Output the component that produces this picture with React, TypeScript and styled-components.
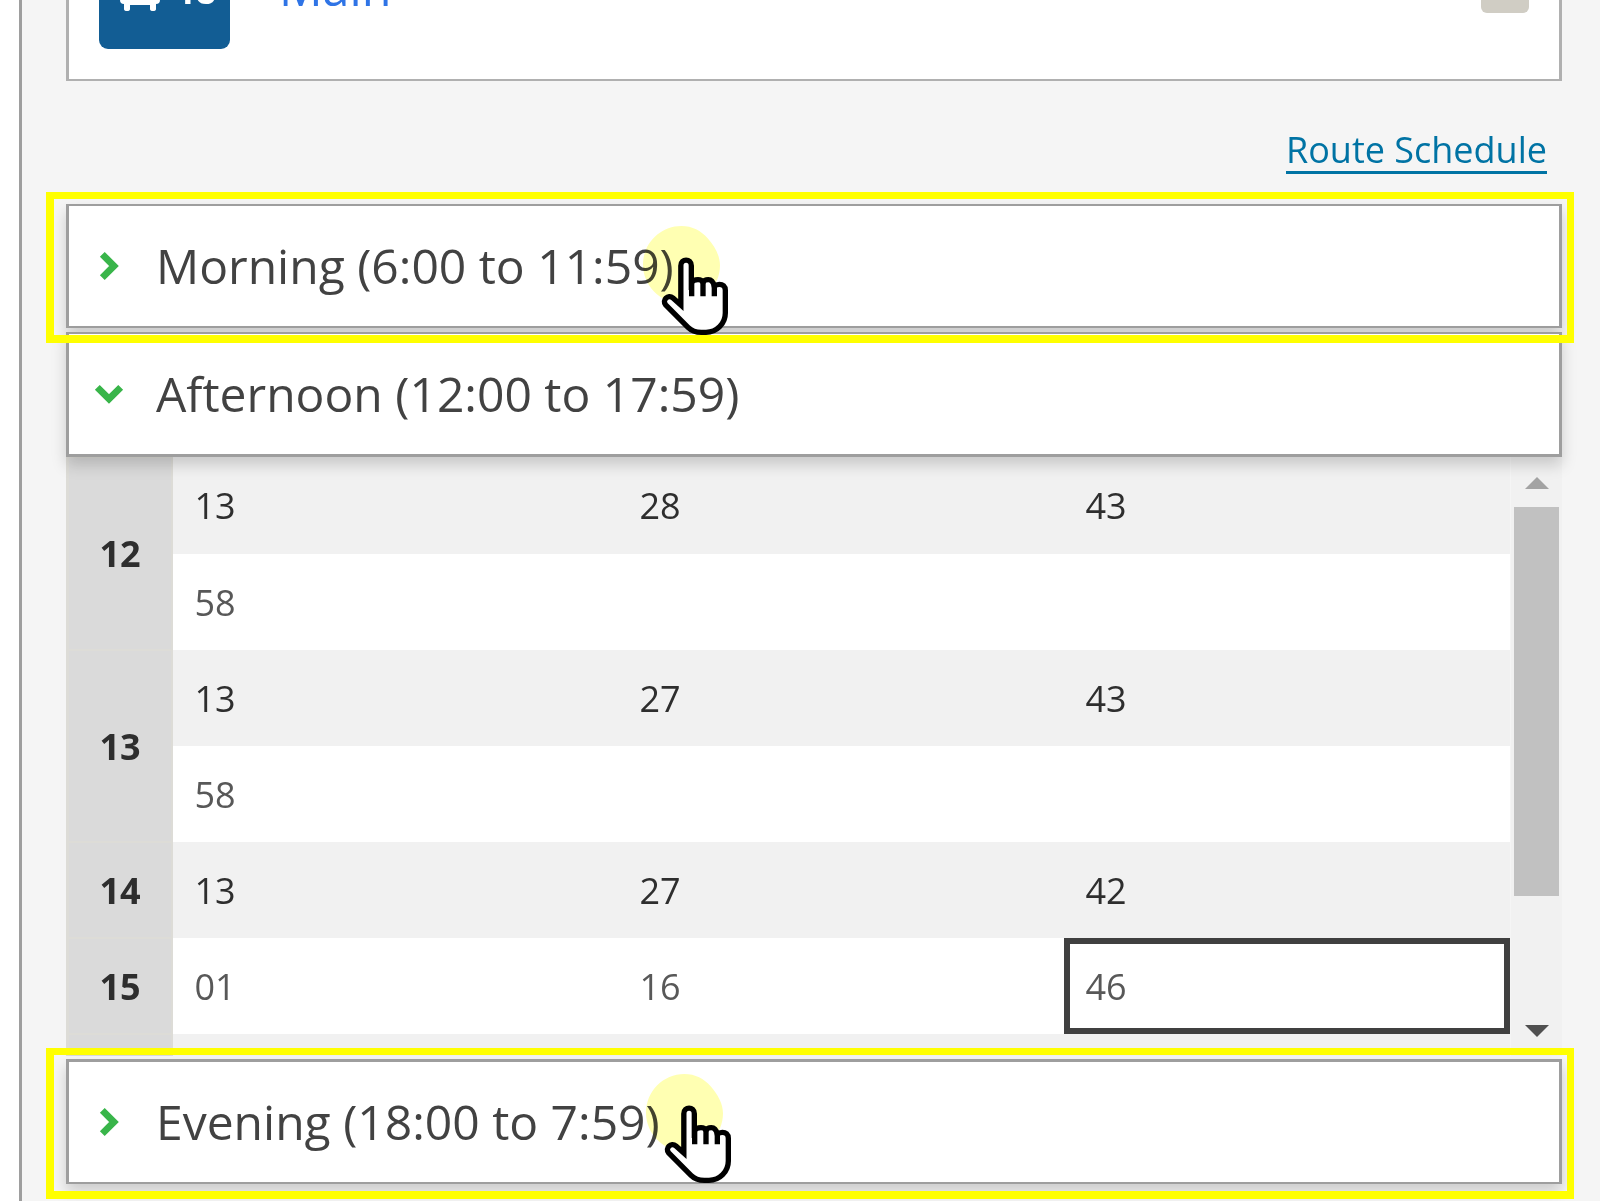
import React from 'react';
import styled, { createGlobalStyle } from 'styled-components';

const GlobalStyle = createGlobalStyle`
  * { box-sizing: border-box; }
  body { margin: 0; background: #fff; font-family: 'Open Sans', 'Noto Sans', sans-serif; }
  table { border-collapse: collapse; }
`;

const Page = styled.div`
  position: relative;
  width: 1601px;
  height: 1201px;
  overflow: hidden;
  padding: 0 1px 0 19px;
`;

const Panel = styled.main`
  height: 100%;
  padding: 0 38px 0 44px;
  border-left: 3px solid #9e9e9e;
  background: #f5f5f5;
  display: flex;
  flex-direction: column;
`;

const RouteCard = styled.section`
  flex: none;
  height: 81px;
  padding: 0 30px 30px;
  overflow: hidden;
  display: flex;
  align-items: flex-end;
  background: #fff;
  border: solid #b0b0b0;
  border-width: 0 3px 2px;
`;

const Badge = styled.div`
  width: 131px;
  height: 90px;
  flex: none;
  padding: 0 14px 38px 20px;
  display: flex;
  align-items: flex-end;
  justify-content: space-between;
  background: #125d94;
  border-radius: 9px;
  color: #fff;
`;

const BusIcon = styled.svg`
  width: 42px;
  height: 44px;
  display: block;
`;

const BadgeNumber = styled.span`
  font-size: 35px;
  font-weight: 700;
  line-height: 34px;
  height: 37px;
`;

const RouteName = styled.span`
  margin-left: 49px;
  height: 95px;
  line-height: 67px;
  font-size: 48.5px;
  color: #2f74e6;
  flex: 1;
`;

const Toggle = styled.span`
  width: 48px;
  height: 48px;
  margin-bottom: 36px;
  border-radius: 6px;
  background: #d0cdc4;
`;

const LinkRow = styled.div`
  flex: none;
  height: 123px;
  padding: 44px 15px 0 0;
  display: flex;
  justify-content: flex-end;
  align-items: flex-start;
`;

const ScheduleLink = styled.a`
  height: 49px;
  border-bottom: 3px solid #0073a4;
  color: #0073a4;
  font-size: 36px;
  line-height: 49px;
  text-decoration: none;
  white-space: nowrap;
`;

const Accordion = styled.div`
  display: flex;
  flex-direction: column;
`;

const Header = styled.button<{ $edges: string; $gap?: number }>`
  position: relative;
  z-index: 1;
  flex: none;
  height: ${(p) => (p.$edges === '2px 3px' ? 124 : 125)}px;
  margin: 0 0 ${(p) => p.$gap ?? 0}px;
  padding: 0 0 0 22px;
  display: flex;
  align-items: center;
  gap: 29px;
  background: #fff;
  border: solid #9e9e9e;
  border-width: ${(p) => p.$edges};
  box-shadow: 0 8px 14px rgba(0, 0, 0, 0.17);
  font: 400 48px/66px 'Open Sans', 'Noto Sans', sans-serif;
  color: #424242;
  text-align: left;
  white-space: nowrap;
`;

const Chevron = styled.svg<{ $open?: boolean }>`
  width: 36px;
  height: 36px;
  flex: none;
  transform: ${(p) => (p.$open ? 'rotate(90deg)' : 'none')};
`;

const Body = styled.div`
  height: 599px;
  margin-bottom: 3px;
  display: flex;
  overflow: hidden;
`;

const Grid = styled.table`
  width: 1444px;
  height: 673px;
  table-layout: fixed;
  flex: none;
  margin-right: 1px;
`;

const HourCol = styled.col`
  width: 107px;
`;

const MinuteCol = styled.col<{ $width: number }>`
  width: ${(p) => p.$width}px;
`;

const Row = styled.tr<{ $shaded: boolean; $first: boolean }>`
  height: ${(p) => (p.$first ? 97 : 96)}px;
  background: ${(p) => (p.$shaded ? '#f1f1f1' : '#fff')};
  color: ${(p) => (p.$shaded ? '#2e2e2e' : '#585858')};
`;

const Hour = styled.th`
  padding: 0 0 0 1px;
  background: #dadada;
  box-shadow: inset 3px 0 #dddcd7, inset -2px 0 #dddcd7, inset 0 -1px #dddcd7, inset 0 1px #dddcd7;
  color: #2e2e2e;
  font-size: 36px;
  font-weight: 700;
`;

const Minute = styled.td<{ $selected?: boolean }>`
  padding: 1px 0 0 21.5px;
  font-size: 36px;
  line-height: 48px;
  box-shadow: ${(p) => (p.$selected ? 'inset 0 0 0 6px #404040' : 'none')};
`;

const Scrollbar = styled.div`
  width: 51px;
  padding: 20px 3px;
  display: flex;
  flex-direction: column;
  align-items: center;
  background: #f1f1f1;
`;

const Arrow = styled.i<{ $down?: boolean }>`
  border: solid transparent;
  border-width: ${(p) => (p.$down ? '12px 12px 0' : '0 12px 12px')};
  border-color: ${(p) => (p.$down ? '#505050' : '#a3a3a3')} transparent;
`;

const Thumb = styled.div`
  width: 45px;
  height: 389px;
  margin: 18px 0 129px;
  flex: none;
  background: #c1c1c1;
`;

const Highlight = styled.div<{ $top: number }>`
  position: absolute;
  z-index: 2;
  left: 46px;
  top: ${(p) => p.$top}px;
  width: 1528px;
  height: 151px;
  border: solid #ff0;
  border-width: 7px 7px 8px 8px;
`;

const Pointer = styled.svg<{ $x: number; $y: number }>`
  position: absolute;
  z-index: 3;
  left: ${(p) => p.$x}px;
  top: ${(p) => p.$y}px;
  width: 100px;
  height: 120px;
  overflow: visible;
  mix-blend-mode: multiply;
`;

const Hand = styled(Pointer)`
  z-index: 4;
  mix-blend-mode: normal;
`;

const hours = [
  { hour: '12', rows: [['13', '28', '43'], ['58', '', '']] },
  { hour: '13', rows: [['13', '27', '43'], ['58', '', '']] },
  { hour: '14', rows: [['13', '27', '42']] },
  { hour: '15', rows: [['01', '16', '46']] },
  { hour: '', rows: [['', '', '']] },
];

const ChevronIcon = ({ open }: { open?: boolean }) => (
  <Chevron $open={open} viewBox="0 0 36 36" fill="none" stroke="#39b54a" strokeWidth="6.8">
    <path d="M11.3 6.3 L23 18 L11.3 29.7" />
  </Chevron>
);

const Cursor = ({ x, y }: { x: number; y: number }) => (
  <>
    <Pointer $x={x} $y={y} viewBox="0 0 300 360">
      <path
        d="M115 0 C148 0 174 14 194 37 C216 62 231 90 231 118 C231 182 179 231 115 231 C52 231 0 179 0 116 C0 52 52 0 115 0Z"
        fill="#ffffb2"
      />
    </Pointer>
    <Hand $x={x} $y={y} viewBox="129 77 300 360">
      <path
        d="M242.5 314 V196 C242.5 174 274 174 274 196 V246 C277 242 286 238 294 238 C300 238 306 240 309 246 C311 242 316 238 325 238 C333 238 340 245 343 258 C346 255 350 252 358 252 C368 252 376 258 376 270 V338 C376 370 350 396 318 396 H304 C289 396 274 391 264 381 L197 314 C185 300 204 280 219 293 Z"
        fill="#fff"
        stroke="#000"
        strokeWidth="16"
      />
      <path d="M275 240 V288 M309 244 V288 M343 254 V288" stroke="#000" strokeWidth="16" />
    </Hand>
  </>
);

export default function App() {
  return (
    <Page>
      <GlobalStyle />
      <Panel>
        <RouteCard>
          <Badge>
            <BusIcon viewBox="0 0 42 44" fill="#fff">
              <path d="M1 0 H41 V33 Q41 37 37 37 V42 Q37 44 34 44 Q31 44 31 42 V38 H11 V42 Q11 44 8 44 Q5 44 5 42 V37 Q1 37 1 33Z" />
            </BusIcon>
            <BadgeNumber>18</BadgeNumber>
          </Badge>
          <RouteName>Main</RouteName>
          <Toggle />
        </RouteCard>
        <LinkRow>
          <ScheduleLink>Route Schedule</ScheduleLink>
        </LinkRow>
        <Accordion>
          <Header $edges="2px 3px" $gap={4}>
            <ChevronIcon />
            <span>Morning (6:00 to 11:59)</span>
          </Header>
          <Header $edges="2px 3px 3px">
            <ChevronIcon open />
            <span>Afternoon (12:00 to 17:59)</span>
          </Header>
          <Body>
            <Grid>
              <colgroup>
                <HourCol />
                <MinuteCol $width={445} />
                <MinuteCol $width={446} />
                <MinuteCol $width={446} />
              </colgroup>
              <tbody>
                {hours.map((h, i) =>
                  h.rows.map((minutes, j) => (
                    <Row
                      key={`${i}-${j}`}
                      $first={i === 0 && j === 0}
                      $shaded={i === 4 || (i !== 3 && j === 0)}
                    >
                      {j === 0 && <Hour rowSpan={h.rows.length}>{h.hour}</Hour>}
                      {minutes.map((m, k) => (
                        <Minute key={k} $selected={m === '46'}>
                          {m}
                        </Minute>
                      ))}
                    </Row>
                  ))
                )}
              </tbody>
            </Grid>
            <Scrollbar>
              <Arrow />
              <Thumb />
              <Arrow $down />
            </Scrollbar>
          </Body>
          <Header $edges="3px 3px 2px">
            <ChevronIcon />
            <span>Evening (18:00 to 7:59)</span>
          </Header>
        </Accordion>
      </Panel>
      <Highlight $top={192} />
      <Highlight $top={1048} />
      <Cursor x={643} y={226} />
      <Cursor x={646} y={1074} />
    </Page>
  );
}
